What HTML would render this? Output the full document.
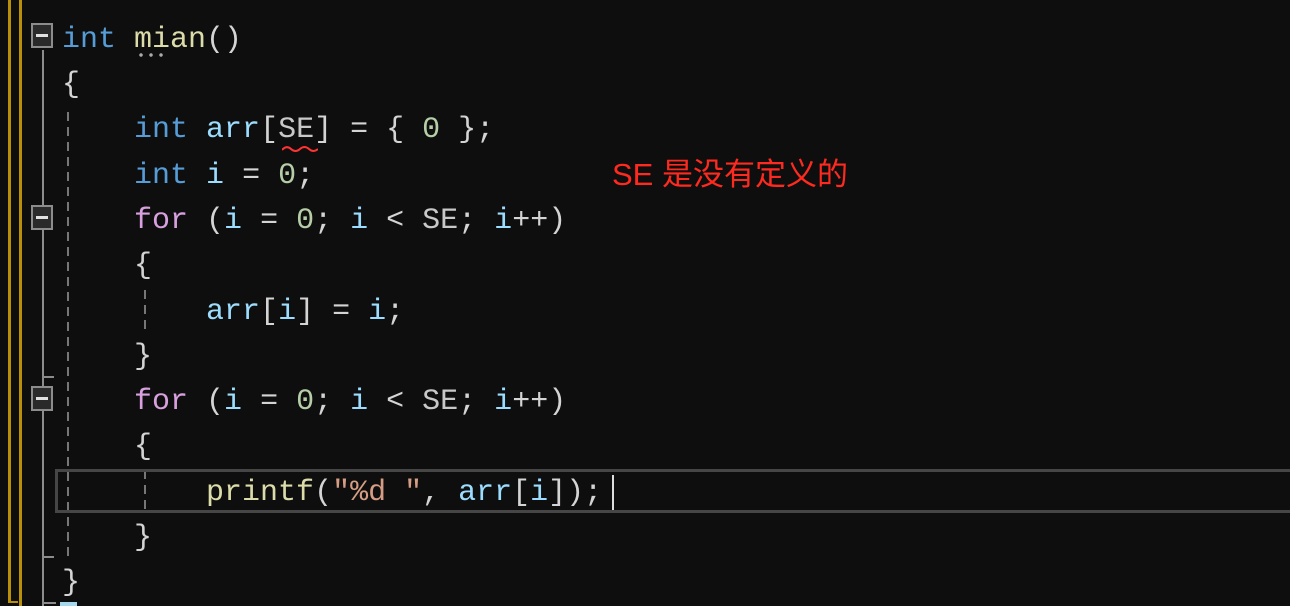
<!DOCTYPE html>
<html><head><meta charset="utf-8"><style>
body{margin:0;width:1290px;height:606px;background:#0e0e0e;overflow:hidden;position:relative;font-family:"Liberation Mono","Noto Serif CJK SC",monospace;}
.l{position:absolute;left:62px;font-size:30px;line-height:45px;height:45px;white-space:pre;color:#d4d4d4;}
.k{color:#569cd6}.f{color:#dcdcaa}.v{color:#9cdcfe}.n{color:#b5cea8}.c{color:#d8a0df}.s{color:#d69d85}.m{color:#c8c8c8}.p{color:#b4b4b4}
.box{position:absolute;left:31px;width:18px;height:21px;border:2px solid #8c8c8c;background:#2a2a2a;}
.box:after{content:"";position:absolute;left:3px;top:9px;width:12px;height:3px;background:#e0e0e0;}
.dash{position:absolute;width:2px;background:repeating-linear-gradient(#777 0 9px,transparent 9px 15px);}
</style></head><body>
<div style="position:absolute;left:8px;top:0;width:3px;height:603px;background:#b8900a"></div>
<div style="position:absolute;left:8px;top:601px;width:10px;height:2px;background:#b8900a"></div>
<div style="position:absolute;left:19px;top:0;width:3px;height:606px;background:#b8900a"></div>
<div style="position:absolute;left:42px;top:50px;width:2px;height:556px;background:#8c8c8c"></div>
<div style="position:absolute;left:42px;top:376px;width:12px;height:2px;background:#8c8c8c"></div>
<div style="position:absolute;left:42px;top:556px;width:12px;height:2px;background:#8c8c8c"></div>
<div style="position:absolute;left:42px;top:602px;width:14px;height:2px;background:#8c8c8c"></div>
<div style="position:absolute;left:60px;top:602px;width:17px;height:4px;background:#a6d8ec"></div>
<div class="dash" style="left:67px;top:112px;height:450px"></div>
<div class="dash" style="left:144px;top:290px;height:40px"></div>
<div class="dash" style="left:144px;top:470px;height:45px"></div>
<div class="box" style="top:23px"></div>
<div class="box" style="top:205px"></div>
<div class="box" style="top:386px"></div>
<div style="position:absolute;left:55px;top:469px;width:1240px;height:38px;border:3px solid #464646"></div>
<div style="position:absolute;left:612px;top:475px;width:2px;height:35px;background:#ddd"></div>
<div class="l" style="top:18px"><span class="k">int</span> <span class="f">mian</span>()</div>
<div style="position:absolute;left:136px;top:53px;width:30px;height:4px;background:radial-gradient(circle,#aaa 1.5px,transparent 2px) 0 0/10px 4px"></div>
<div class="l" style="top:63px">{</div>
<div class="l" style="top:108px">    <span class="k">int</span> <span class="v">arr</span>[<span class="m">SE</span>] = { <span class="n">0</span> };</div>
<svg style="position:absolute;left:282px;top:145px" width="36" height="8"><path d="M0 5 Q4.5 0 9 4 T18 4 T27 4 T36 4" stroke="#f33" stroke-width="2" fill="none"/></svg>
<div class="l" style="top:154px">    <span class="k">int</span> <span class="v">i</span> = <span class="n">0</span>;</div>
<div class="l" style="top:199px">    <span class="c">for</span> (<span class="v">i</span> = <span class="n">0</span>; <span class="v">i</span> &lt; <span class="m">SE</span>; <span class="v">i</span>++)</div>
<div class="l" style="top:244px">    {</div>
<div class="l" style="top:290px">        <span class="v">arr</span>[<span class="v">i</span>] = <span class="v">i</span>;</div>
<div class="l" style="top:335px">    }</div>
<div class="l" style="top:380px">    <span class="c">for</span> (<span class="v">i</span> = <span class="n">0</span>; <span class="v">i</span> &lt; <span class="m">SE</span>; <span class="v">i</span>++)</div>
<div class="l" style="top:425px">    {</div>
<div class="l" style="top:471px">        <span class="f">printf</span>(<span class="s">″%d ″</span>, <span class="v">arr</span>[<span class="v">i</span>]);</div>
<div class="l" style="top:516px">    }</div>
<div class="l" style="top:561px">}</div>
<div style="position:absolute;left:612px;top:157px;font-family:'Liberation Sans','Noto Sans CJK SC',sans-serif;font-size:31px;line-height:36px;color:#ff2a1f;white-space:nowrap">SE 是没有定义的</div>
</body></html>
